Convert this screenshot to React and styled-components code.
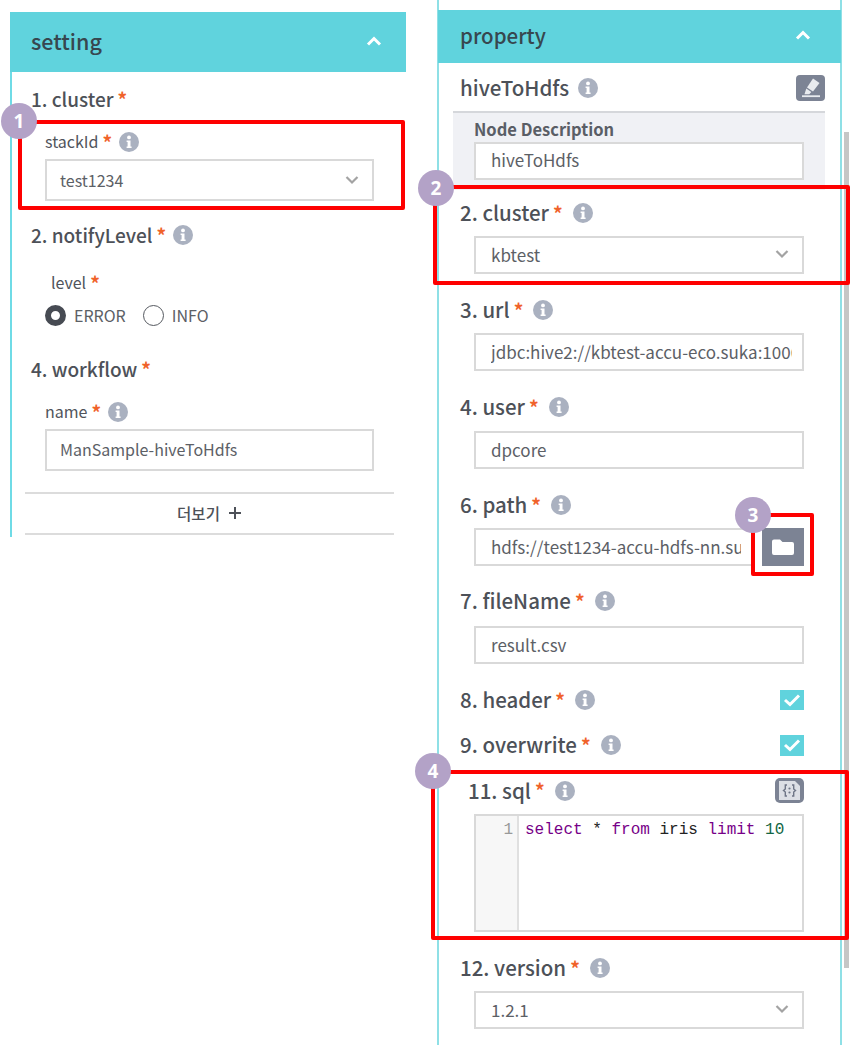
import React from "react";
import styled, { createGlobalStyle } from "styled-components";

const Global = createGlobalStyle`
  html, body { margin: 0; padding: 0; background: #fff; }
  body { font-family: "Noto Sans CJK KR", "Noto Sans", sans-serif; color: #50545b; }
  * { box-sizing: border-box; }
`;

const Page = styled.div`
  position: relative;
  width: 851px;
  height: 1045px;
  overflow: hidden;
  display: flex;
  align-items: flex-start;
  background: #fff;
`;

const SettingPanel = styled.section`
  width: 396px;
  margin: 12px 0 0 10px;
`;

const PropertyPanel = styled.section`
  width: 405px;
  height: 1045px;
  margin-left: 31px;
  padding-top: 10px;
  border-left: 2px solid #8fe0e6;
  border-right: 2px solid #8fe0e6;
`;

const PanelHeader = styled.header`
  display: flex;
  align-items: center;
  justify-content: space-between;
  height: ${(p) => p.$h}px;
  margin: 0 ${(p) => p.$bleed}px;
  padding: 0 ${(p) => p.$pr}px 3px ${(p) => p.$pl}px;
  background: #60d3dd;
  color: #37474f;
  font-size: ${(p) => p.$size}px;
  font-weight: 500;
  line-height: 1;
`;

const SettingBody = styled.div`
  padding: 15px 12px 2px 13px;
  border-left: 2px solid #6fdbe6;
`;

const PropertyBody = styled.div`
  padding: 12px 15px 0 21px;
`;

const Heading = styled.div`
  display: flex;
  align-items: center;
  height: 24px;
  padding-bottom: 2px;
  margin-top: ${(p) => p.$mt || 0}px;
  margin-left: ${(p) => p.$ml || 0}px;
  font-size: ${(p) => p.$size}px;
  font-weight: 500;
  color: #4d5158;
  white-space: nowrap;
`;

const SubLabel = styled.div`
  display: flex;
  align-items: center;
  height: 22px;
  margin-top: ${(p) => p.$mt}px;
  margin-left: ${(p) => p.$ml}px;
  font-size: 16px;
  color: #50545b;
  white-space: nowrap;
`;

const Star = styled.span`
  margin-left: 4px;
  color: #f0622a;
  font-size: 19px;
  font-weight: 700;
  line-height: 1;
`;

const InfoWrap = styled.span`
  display: inline-flex;
  margin-left: ${(p) => p.$ml || 7}px;
  margin-top: 2px;
`;

const Box = styled.div`
  display: flex;
  align-items: center;
  justify-content: space-between;
  width: ${(p) => p.$w}px;
  height: ${(p) => p.$h}px;
  margin-top: ${(p) => p.$mt}px;
  margin-left: ${(p) => p.$ml}px;
  padding: 0 13px ${(p) => p.$pb || 0}px ${(p) => p.$pad}px;
  background: #fff;
  border: 2px solid #d9d9d9;
  font-size: ${(p) => p.$size}px;
  color: #5c6066;
`;

const TextField = styled.input`
  display: block;
  width: ${(p) => p.$w}px;
  height: ${(p) => p.$h}px;
  margin-top: ${(p) => p.$mt}px;
  margin-left: ${(p) => p.$ml}px;
  padding: 0 10px ${(p) => p.$pb || 0}px ${(p) => p.$pad}px;
  background: #fff;
  border: 2px solid #d9d9d9;
  outline: none;
  font-family: inherit;
  font-size: ${(p) => p.$size}px;
  color: #5c6066;
`;

const RadioRow = styled.div`
  display: flex;
  align-items: center;
  height: 22px;
  margin: 11px 0 0 20px;
`;

const Radio = styled.span`
  width: 21px;
  height: 21px;
  border-radius: 50%;
  background: #fff;
  border: ${(p) => (p.$on ? "6px solid #474b53" : "1.5px solid #55595f")};
  flex: none;
`;

const RadioText = styled.span`
  margin: 0 17px 0 8px;
  font-size: 16px;
  color: #5c6066;
`;

const More = styled.div`
  display: flex;
  align-items: center;
  justify-content: center;
  gap: 8px;
  height: 43px;
  margin: 21px 0 0 0;
  padding-bottom: 2px;
  border-top: 2px solid #dcdcdc;
  border-bottom: 2px solid #dcdcdc;
  font-size: 15.5px;
  font-weight: 500;
  color: #4d5158;
`;

const Row = styled.div`
  display: flex;
  align-items: center;
  justify-content: space-between;
  margin-top: ${(p) => p.$mt || 0}px;
  padding-right: ${(p) => p.$pr || 0}px;
`;

const PathRow = styled.div`
  display: flex;
  gap: 9px;
  margin: 11px 0 0 14px;
`;

const IconButton = styled.span`
  display: flex;
  align-items: center;
  justify-content: center;
  width: ${(p) => p.$w}px;
  height: ${(p) => p.$h}px;
  border-radius: ${(p) => p.$r}px;
  background: #7c8394;
  flex: none;
`;

const NodeBlock = styled.div`
  height: 79px;
  margin: 10px 0 0 -7px;
  padding: 5px 21px 0 21px;
  background: #f0f1f5;
  border-top: 2px solid #d5d7db;
`;

const NodeLabel = styled.div`
  height: 23px;
  font-size: 16.5px;
  font-weight: 700;
  color: #5a5e66;
  line-height: 22px;
`;

const Check = styled.span`
  display: flex;
  align-items: center;
  justify-content: center;
  width: 24px;
  height: ${(p) => p.$h}px;
  background: #60d3dd;
`;

const CodeBox = styled.div`
  display: flex;
  width: 330px;
  height: 118px;
  margin: 11px 0 0 14px;
  border: 2px solid #d9d9d9;
  font-family: "Liberation Mono", "DejaVu Sans Mono", monospace;
  font-size: 16px;
  line-height: 24px;
`;

const Gutter = styled.div`
  width: 43px;
  padding: 2px 4px 0 0;
  text-align: right;
  background: #f7f7f7;
  border-right: 2px solid #e0e0e0;
  color: #999;
`;

const Code = styled.div`
  padding: 2px 0 0 6px;
  color: #222;
  white-space: pre;
`;

const Kw = styled.span`
  color: #770088;
`;

const Num = styled.span`
  color: #116644;
`;

const Scroll = styled.div`
  position: absolute;
  left: 844px;
  top: 132px;
  width: 5px;
  height: 836px;
  background: #c6c6c6;
`;

const Callout = styled.div`
  position: absolute;
  left: ${(p) => p.$x}px;
  top: ${(p) => p.$y}px;
  width: ${(p) => p.$w}px;
  height: ${(p) => p.$h}px;
  border: 4px solid #fe0000;
  border-radius: 2px;
  pointer-events: none;
`;

const Badge = styled.div`
  position: absolute;
  left: ${(p) => p.$x}px;
  top: ${(p) => p.$y}px;
  display: flex;
  align-items: center;
  justify-content: center;
  width: 36px;
  height: 36px;
  border-radius: 50%;
  background: #b3a2c7;
  color: #fff;
  font-family: "Noto Sans", sans-serif;
  font-size: 19px;
  font-weight: 700;
`;

const Info = ({ ml }) => (
  <InfoWrap $ml={ml}>
    <svg width="20" height="20" viewBox="0 0 20 20">
      <circle cx="10" cy="10" r="10" fill="#aab1c0" />
      <circle cx="10" cy="5.4" r="1.9" fill="#fff" />
      <path d="M7.6 8.4h3.9v6h1.1v1.5H7.6v-1.5h1v-4.5h-1z" fill="#fff" />
    </svg>
  </InfoWrap>
);

const ChevronUp = () => (
  <svg width="16" height="12" viewBox="0 0 16 12">
    <path d="M2 9.5 8 3.5l6 6" fill="none" stroke="#fff" strokeWidth="3" />
  </svg>
);

const ChevronDown = () => (
  <svg width="14" height="10" viewBox="0 0 14 10">
    <path d="M1.5 2 7 7.5 12.500 2" fill="none" stroke="#a3a3a3" strokeWidth="2.200" />
  </svg>
);

const Tick = () => (
  <svg width="18" height="14" viewBox="0 0 18 14">
    <path d="M2 7l5 4.500L16 2.500" fill="none" stroke="#fff" strokeWidth="3" />
  </svg>
);

const Highlighter = () => (
  <svg width="24" height="22" viewBox="0 0 24 22">
    <path d="M14 1.500l6.500 4.500-6.500 8.500-6-4z" fill="#e9ebef" />
    <path d="M7.300 11.500l5 3.400-2 2.400H5.500z" fill="#e9ebef" />
    <rect x="3" y="18.300" width="18" height="1.800" fill="#e9ebef" />
  </svg>
);

const Folder = () => (
  <svg width="24" height="20" viewBox="0 0 24 20">
    <path d="M1 4.500a2 2 0 0 1 2-2h6l2.500 2.500H21a2 2 0 0 1 2 2V16a2 2 0 0 1-2 2H3a2 2 0 0 1-2-2z" fill="#fff" />
  </svg>
);

const CodeIcon = () => (
  <svg width="25" height="21" viewBox="0 0 25 21">
    <path d="M2 1h16l5 5v14H2z" fill="#dcdfe5" />
    <path
      d="M10 5H8.300v4L6.500 10.500 8.300 12v4H10M15 5h1.700v4l1.800 1.500-1.800 1.500v4H15"
      fill="none"
      stroke="#6f7687"
      strokeWidth="1.400"
    />
    <circle cx="12.500" cy="8.500" r="1.100" fill="#6f7687" />
    <circle cx="12.500" cy="12.500" r="1.100" fill="#6f7687" />
  </svg>
);

const Req = () => <Star>*</Star>;

const PField = ({ title, mt }) => (
  <Heading $mt={mt} $size={20.5}>
    {title}
    <Req />
    <Info ml={10} />
  </Heading>
);

const LHead = ({ mt, info, children }) => (
  <Heading $mt={mt} $ml={6} $size={19}>
    {children}
    <Req />
    {info && <Info />}
  </Heading>
);

export default function App() {
  return (
    <Page>
      <Global />
      <SettingPanel>
        <PanelHeader $h={60} $bleed={0} $pl={21} $pr={24} $size={21.5}>
          setting
          <ChevronUp />
        </PanelHeader>
        <SettingBody>
          <LHead>1. cluster</LHead>
          <SubLabel $mt={19} $ml={20}>
            stackId
            <Req />
            <Info />
          </SubLabel>
          <Box $w={329} $h={42} $mt={7} $ml={20} $pad={13} $size={16}>
            test1234
            <ChevronDown />
          </Box>
          <LHead mt={22} info>
            2. notifyLevel
          </LHead>
          <SubLabel $mt={24} $ml={26}>
            level
            <Req />
          </SubLabel>
          <RadioRow>
            <Radio $on />
            <RadioText>ERROR</RadioText>
            <Radio />
            <RadioText>INFO</RadioText>
          </RadioRow>
          <LHead mt={31}>4. workflow</LHead>
          <SubLabel $mt={19} $ml={20}>
            name
            <Req />
            <Info />
          </SubLabel>
          <TextField readOnly value="ManSample-hiveToHdfs" $w={329} $h={42} $mt={7} $ml={20} $pad={13} $size={16} $pb={2} />
          <More>
            더보기
            <svg width="14" height="14" viewBox="0 0 14 14">
              <path d="M7 1v12M1 7h12" stroke="#4d5158" strokeWidth="2" />
            </svg>
          </More>
        </SettingBody>
      </SettingPanel>

      <PropertyPanel>
        <PanelHeader $h={53} $bleed={-1} $pl={22} $pr={30} $size={20.5}>
          property
          <ChevronUp />
        </PanelHeader>
        <PropertyBody>
          <Row>
            <Heading $size={20.5}>
              hiveToHdfs
              <Info ml={9} />
            </Heading>
            <IconButton $w={29} $h={26} $r={4}>
              <Highlighter />
            </IconButton>
          </Row>
          <NodeBlock>
            <NodeLabel>Node Description</NodeLabel>
            <TextField readOnly value="hiveToHdfs" $w={330} $h={38} $mt={1} $ml={0} $pad={15} $size={17} $pb={3} />
          </NodeBlock>

          <PField title="2. cluster" mt={11} />
          <Box $w={330} $h={38} $mt={11} $ml={14} $pad={15} $size={17} $pb={2}>
            kbtest
            <ChevronDown />
          </Box>

          <PField title="3. url" mt={24} />
          <TextField readOnly value="jdbc:hive2://kbtest-accu-eco.suka:10000" $w={330} $h={38} $mt={11} $ml={14} $pad={15} $size={17} $pb={2} />

          <PField title="4. user" mt={24} />
          <TextField readOnly value="dpcore" $w={330} $h={38} $mt={12} $ml={14} $pad={15} $size={17} $pb={2} />

          <PField title="6. path" mt={24} />
          <PathRow>
            <TextField readOnly value="hdfs://test1234-accu-hdfs-nn.suka:8020" $w={279} $h={38} $mt={0} $ml={0} $pad={15} $size={17} $pb={2} />
            <IconButton $w={42} $h={38} $r={0}>
              <Folder />
            </IconButton>
          </PathRow>

          <PField title="7. fileName" mt={23} />
          <TextField readOnly value="result.csv" $w={330} $h={38} $mt={13} $ml={14} $pad={15} $size={17} $pb={2} />

          <Row $mt={24} $pr={21}>
            <PField title="8. header" />
            <Check $h={20}>
              <Tick />
            </Check>
          </Row>
          <Row $mt={21} $pr={21}>
            <PField title="9. overwrite" />
            <Check $h={21}>
              <Tick />
            </Check>
          </Row>

          <Row $mt={21} $pr={21}>
            <Heading $ml={8} $size={20.5}>
              11. sql
              <Req />
              <Info ml={10} />
            </Heading>
            <IconButton $w={29} $h={25} $r={5}>
              <CodeIcon />
            </IconButton>
          </Row>
          <CodeBox>
            <Gutter>1</Gutter>
            <Code>
              <Kw>select</Kw> * <Kw>from</Kw> iris <Kw>limit</Kw> <Num>10</Num>
            </Code>
          </CodeBox>

          <PField title="12. version" mt={24} />
          <Box $w={330} $h={38} $mt={11} $ml={14} $pad={15} $size={17} $pb={2}>
            1.2.1
            <ChevronDown />
          </Box>
        </PropertyBody>
      </PropertyPanel>

      <Scroll />

      <Callout $x={18} $y={120} $w={387} $h={90} />
      <Callout $x={433} $y={185} $w={417} $h={100} />
      <Callout $x={751} $y={513} $w={63} $h={63} />
      <Callout $x={431} $y={770} $w={418} $h={170} />
      <Badge $x={1} $y={103}>1</Badge>
      <Badge $x={418} $y={170}>2</Badge>
      <Badge $x={735} $y={497}>3</Badge>
      <Badge $x={415} $y={753}>4</Badge>
    </Page>
  );
}
